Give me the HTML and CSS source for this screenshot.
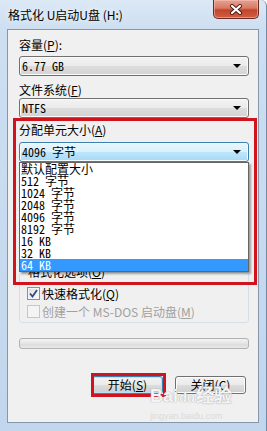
FILE: index.html
```html
<!DOCTYPE html>
<html lang="zh-CN">
<head>
  <meta charset="UTF-8">
  <meta name="viewport" content="width=device-width, initial-scale=1.0">
  <title>格式化 U启动U盘 (H:)</title>
  <link rel="stylesheet" href="styles.css">
</head>
<body>
  <div class="window">
    <div class="titlebar">
      <span class="title">格式化 U启动U盘 (H:)</span>
      <button class="close" type="button">
        <svg width="14" height="11" viewBox="0 0 14 11">
          <path d="M3 2 L11 9 M11 2 L3 9" stroke="#4a1a14" stroke-width="4" stroke-linecap="round"/>
          <path d="M3 2 L11 9 M11 2 L3 9" stroke="#fff" stroke-width="2.2" stroke-linecap="round"/>
        </svg>
      </button>
    </div>

    <div class="panel">
      <div class="field-label label-first">容量(<u>P</u>):</div>
      <div class="combo mono">6.77 GB<span class="arrow"></span></div>

      <div class="field-label label-fs">文件系统(<u>F</u>)</div>
      <div class="combo mono">NTFS<span class="arrow"></span></div>

      <div class="field-label label-size">分配单元大小(<u>A</u>)</div>
      <div class="combo-wrap">
        <div class="combo combo-focus mono">4096 字节<span class="arrow"></span></div>
        <ul class="droplist mono">
          <li>默认配置大小</li>
          <li>512 字节</li>
          <li>1024 字节</li>
          <li>2048 字节</li>
          <li>4096 字节</li>
          <li>8192 字节</li>
          <li>16 KB</li>
          <li>32 KB</li>
          <li class="selected">64 KB</li>
        </ul>
      </div>

      <fieldset class="options">
        <legend>格式化选项(<u>O</u>)</legend>
        <label class="check">
          <span class="box">
            <svg width="9" height="9" viewBox="0 0 9 9"><path d="M1 4.5 L3.5 7.5 L8 1" fill="none" stroke="#2c4a8c" stroke-width="1.8"/></svg>
          </span>
          快速格式化(<u>Q</u>)
        </label>
        <label class="check disabled">
          <span class="box"></span>
          创建一个 MS-DOS 启动盘(<u>M</u>)
        </label>
      </fieldset>

      <div class="progress"></div>

      <div class="actions">
        <button class="btn btn-default" type="button">开始(<u>S</u>)</button>
        <button class="btn" type="button">关闭(<u>C</u>)</button>
      </div>
    </div>

    <!-- annotation boxes drawn over the dialog -->
    <div class="mark mark-size"></div>
    <div class="mark mark-start"></div>

    <div class="watermark">
      <span class="wm-logo">Bai<span class="wm-paw">du</span>经验</span>
      <span class="wm-url">jingyan.baidu.com</span>
    </div>
  </div>
</body>
</html>
```

FILE: styles.css
```css
html, body {
  margin: 0;
  padding: 0;
}
body {
  font-family: "Noto Sans CJK SC", "Noto Sans", sans-serif;
  font-size: 12px;
  color: #000;
  background: #fff;
}
.window {
  position: relative;
  width: 267px;
  height: 431px;
  box-sizing: border-box;
  background: linear-gradient(180deg, #dce8f5 0, #cddff1 28px, #c1d6ed 100%);
  border-right: 1px solid #7489a3;
  border-top-right-radius: 6px;
  overflow: hidden;
}

/* title bar */
.titlebar {
  height: 29px;
  display: flex;
  justify-content: space-between;
  align-items: flex-start;
}
.title {
  padding-left: 8px;
  line-height: 29px;
  font-size: 12px;
  color: #000;
  text-shadow: 0 0 6px #fff;
}
.close {
  width: 46px;
  height: 19px;
  margin-right: 7px;
  padding: 0;
  border: 1px solid #6a2a22;
  border-top: none;
  border-radius: 0 0 5px 5px;
  background: linear-gradient(180deg, #e4a392 0, #d77a65 45%, #c2442b 55%, #cf5f43 100%);
  box-shadow: inset 0 0 0 1px rgba(255, 200, 190, 0.5);
  display: flex;
  align-items: center;
  justify-content: center;
}

/* dialog body */
.panel {
  margin-left: 7px;
  width: 252px;
  height: 394px;
  box-sizing: border-box;
  border: 1px solid #8797ab;
  background: #f0f0f0;
  padding: 0 9px 0 11px;
}
.field-label {
  line-height: 16px;
  height: 16px;
}
.label-first { margin-top: 7px; margin-bottom: 3px; }
.label-fs { margin-top: 6px; }
.label-size { margin-top: 4px; margin-bottom: 4px; }

.mono {
  font-family: "Noto Sans Mono CJK SC", "Liberation Mono", "Noto Sans CJK SC", monospace;
  font-size: 12px;
}
.combo {
  height: 20px;
  box-sizing: border-box;
  border: 1px solid #707070;
  border-radius: 3px;
  background: linear-gradient(180deg, #f3f3f3 0, #ebebeb 50%, #dddddd 50%, #d3d3d3 100%);
  box-shadow: inset 0 0 0 1px #fafafa;
  display: flex;
  align-items: center;
  padding: 0 7px 0 2px;
  line-height: 18px;
}
.combo-focus {
  border-color: #3c7fb1;
  background: linear-gradient(180deg, #eaf6fd 0, #d9f0fc 50%, #bee6fd 50%, #a7d9f5 100%);
  box-shadow: inset 0 0 0 1px #f4fbff;
}
.arrow {
  margin-left: auto;
  width: 0;
  height: 0;
  border-left: 4px solid transparent;
  border-right: 4px solid transparent;
  border-top: 4px solid #000;
}
.combo-wrap {
  position: relative;
}
.droplist {
  position: absolute;
  top: 100%;
  left: 0;
  right: 0;
  margin: 0;
  padding: 0;
  list-style: none;
  background: #fff;
  border: 1px solid #646464;
  box-shadow: 2px 2px 2px rgba(0, 0, 0, 0.35);
  z-index: 2;
}
.droplist li {
  height: 12px;
  line-height: 12px;
  padding-left: 1px;
  white-space: nowrap;
}
.droplist li.selected {
  background: #3399ff;
  color: #fff;
}

/* format options */
.options {
  margin: 103px 0 0;
  padding: 5px 6px 2px 7px;
  border: 1px solid #d5dfe5;
  border-radius: 3px;
}
.options legend {
  padding: 0 1px;
  line-height: 14px;
}
.check {
  display: flex;
  align-items: center;
  height: 18px;
  white-space: nowrap;
}
.box {
  width: 13px;
  height: 13px;
  box-sizing: border-box;
  margin-right: 2px;
  border: 1px solid #8e8f8f;
  background: linear-gradient(135deg, #dcdcdc 0, #ffffff 100%);
  box-shadow: inset 0 0 0 1px #f4f4f4;
  display: flex;
  align-items: center;
  justify-content: center;
}
.check.disabled {
  color: #a0a0a0;
}
.check.disabled .box {
  border-color: #c6c6c6;
  background: #f4f4f4;
}

.progress {
  margin-top: 15px;
  height: 11px;
  box-sizing: border-box;
  border: 1px solid #b2b2b2;
  border-radius: 3px;
  background: linear-gradient(180deg, #f4f4f4 0, #e4e4e4 50%, #dadada 50%, #e8e8e8 100%);
}

.actions {
  margin-top: 27px;
  display: flex;
  justify-content: flex-end;
  gap: 12px;
  padding-right: 3px;
}
.btn {
  width: 71px;
  height: 18px;
  padding: 0;
  font-family: inherit;
  font-size: 12px;
  line-height: 16px;
  color: #000;
  border: 1px solid #707070;
  border-radius: 3px;
  background: linear-gradient(180deg, #f2f2f2 0, #ebebeb 50%, #dddddd 50%, #cfcfcf 100%);
  box-shadow: inset 0 0 0 1px #fcfcfc;
}
.btn-default {
  border-color: #3c7fb1;
  box-shadow: inset 0 0 0 1px #b9e2f8;
}

/* red annotation frames */
.mark {
  position: absolute;
  box-sizing: border-box;
  border: 3px solid #d0141e;
  z-index: 3;
}
.mark-size {
  left: 13px;
  top: 118px;
  width: 244px;
  height: 167px;
}
.mark-start {
  left: 91px;
  top: 373px;
  width: 75px;
  height: 24px;
}

/* image watermark */
.watermark {
  position: absolute;
  left: 150px;
  top: 386px;
  width: 92px;
  z-index: 4;
  color: rgba(255, 255, 255, 0.9);
}
.wm-logo {
  display: block;
  font-family: "Liberation Sans", sans-serif;
  font-weight: bold;
  font-size: 18px;
  line-height: 20px;
  text-shadow: 0 0 1px #a8a8a8, 0 0 1px #a8a8a8;
  white-space: nowrap;
}
.wm-paw {
  font-size: 13px;
  padding: 0 1px;
}
.wm-url {
  display: block;
  margin-top: 3px;
  font-family: "Liberation Sans", sans-serif;
  font-size: 9px;
  line-height: 10px;
  color: #dadada;
}
```
